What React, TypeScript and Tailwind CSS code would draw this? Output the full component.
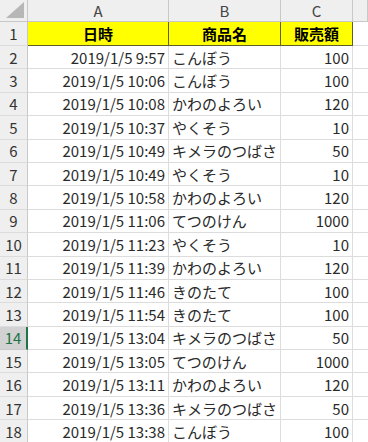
import React from 'react';

const ROWS: [string, string, number][] = [
  ['2019/1/5 9:57', 'こんぼう', 100],
  ['2019/1/5 10:06', 'こんぼう', 100],
  ['2019/1/5 10:08', 'かわのよろい', 120],
  ['2019/1/5 10:37', 'やくそう', 10],
  ['2019/1/5 10:49', 'キメラのつばさ', 50],
  ['2019/1/5 10:49', 'やくそう', 10],
  ['2019/1/5 10:58', 'かわのよろい', 120],
  ['2019/1/5 11:06', 'てつのけん', 1000],
  ['2019/1/5 11:23', 'やくそう', 10],
  ['2019/1/5 11:39', 'かわのよろい', 120],
  ['2019/1/5 11:46', 'きのたて', 100],
  ['2019/1/5 11:54', 'きのたて', 100],
  ['2019/1/5 13:04', 'キメラのつばさ', 50],
  ['2019/1/5 13:05', 'てつのけん', 1000],
  ['2019/1/5 13:11', 'かわのよろい', 120],
  ['2019/1/5 13:36', 'キメラのつばさ', 50],
  ['2019/1/5 13:38', 'こんぼう', 100],
];

const COLS = 'grid grid-cols-[28px_141px_112px_72px_1fr]';

const RowHead: React.FC<{ n: number; active?: boolean }> = ({ n, active }) => (
  <div
    className={
      active
        ? 'flex items-center justify-center bg-[#d2d2d2] text-[#217346] border-r-2 border-r-[#217346] border-b border-b-[#c8c8c8]'
        : 'flex items-center justify-center bg-[#efefef] text-[#333] border-r border-r-[#c8c8c8] border-b border-b-[#dcdcdc]'
    }
  >
    {n}
  </div>
);

export default function App() {
  return (
    <div
      className="w-[368px] h-[442px] overflow-hidden bg-white text-[15px] leading-none text-[#2a2a2a]"
      style={{ fontFamily: '"Noto Sans CJK JP", "Noto Sans", sans-serif' }}
    >
      {/* column headers */}
      <div className={`${COLS} h-[22px] bg-[#efefef] text-[#444] text-[15px]`}>
        <div className="relative border-r border-b border-[#c8c8c8]">
          <svg className="absolute right-[3px] bottom-[3px]" width="18" height="16" viewBox="0 0 18 16">
            <polygon points="18,0 18,16 0,16" fill="#b7b7b7" />
          </svg>
        </div>
        {['A', 'B', 'C', ''].map((c, i) => (
          <div key={i} className="flex items-center justify-center border-r border-b border-[#c8c8c8]">
            {c}
          </div>
        ))}
      </div>

      {/* row 1: yellow titles */}
      <div className={`${COLS} h-[24px]`}>
        <RowHead n={1} />
        {['日時', '商品名', '販売額'].map((t) => (
          <div
            key={t}
            className="flex items-center justify-center bg-[#ffff00] font-bold text-black border-r border-b border-[#5e5e2a]"
          >
            {t}
          </div>
        ))}
        <div className="border-b border-[#dcdcdc]" />
      </div>

      {ROWS.map(([d, name, amt], i) => (
        <div key={i} className={`${COLS} h-[23.4px]`}>
          <RowHead n={i + 2} active={i + 2 === 14} />
          <div className="flex items-center justify-end pr-[3px] border-r border-b border-[#dcdcdc]">{d}</div>
          <div className="flex items-center pl-[3px] border-r border-b border-[#dcdcdc] whitespace-nowrap overflow-hidden">
            {name}
          </div>
          <div className="flex items-center justify-end pr-[3px] border-r border-b border-[#dcdcdc]">{amt}</div>
          <div className="border-b border-[#dcdcdc]" />
        </div>
      ))}
    </div>
  );
}
